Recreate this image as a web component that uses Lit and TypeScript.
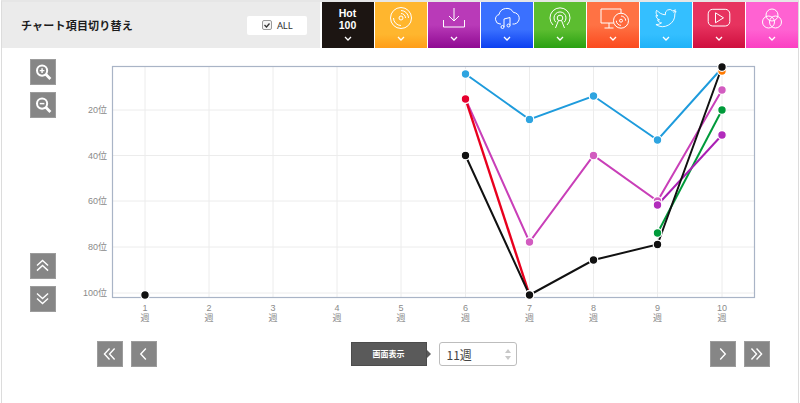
import { LitElement, html, css, svg } from "lit";
import { customElement } from "lit/decorators.js";

type Series = { color: string; dot?: string; width?: number; pts: [number, number][] };

const X = [145, 209, 273, 337, 401, 465.5, 529.5, 593.5, 657.5, 722];
const OX = 60;
const OY = 59;
const series: Series[] = [
  { color: "#1e9bdc", dot: "#2ea4e0", pts: [[X[5], 74], [X[6], 119.5], [X[7], 96], [X[8], 140], [X[9], 68]] },
  { color: "#c93fb8", dot: "#d25cc0", pts: [[X[5], 99], [X[6], 242], [X[7], 155.5], [X[8], 201], [X[9], 90]] },
  { color: "#ff7a00", pts: [[X[9], 71]] },
  { color: "#009a3a", pts: [[X[8], 233], [X[9], 110]] },
  { color: "#aa1fb4", dot: "#b22cbc", pts: [[X[8], 205], [X[9], 135]] },
  { color: "#e8001e", dot: "#e6002e", width: 2.4, pts: [[X[5], 99], [X[6], 295]] },
  { color: "#111", pts: [[X[0], 295]] },
  { color: "#111", pts: [[X[5], 155.5], [X[6], 295], [X[7], 260], [X[8], 244.5], [X[9], 67]] },
];

const chev = html`<svg class="chev" viewBox="0 0 8 5"><path d="M1 1l3 3 3-3" /></svg>`;

const icons = [
  svg`<circle cx="14" cy="14" r="10.5"/><circle cx="14" cy="14" r="2"/><path d="M14 6.500a7.500 7.500 0 0 1 7.500 7.500M14 9.500a4.500 4.500 0 0 1 4.500 4.500M6.500 14a7.500 7.500 0 0 0 7.500 7.500"/>`,
  svg`<path d="M14 4v13M9 12l5 5 5-5M3.500 16v7h21v-7"/>`,
  svg`<path d="M8 20H7a4.800 4.800 0 0 1-1-9.400A7.800 7.800 0 0 1 20.500 8.500 5.800 5.800 0 0 1 21.500 20h-2"/><path d="M11 23v-8l6-1.500v8"/><circle cx="9.500" cy="23" r="1.500"/><circle cx="15.500" cy="21.500" r="1.500"/>`,
  svg`<circle cx="14" cy="14" r="2.800"/><path d="M9.800 18.200a6 6 0 1 1 8.400 0M7 21a10 10 0 1 1 14 0M12.500 16.500L9.500 24M15.500 16.500L18.500 24"/>`,
];

const wideIcon = svg`<path d="M5 5h20v14H5zM13 19v5M8.500 24h9"/><circle cx="25" cy="16.700" r="7.500" fill="#ff6a3d"/><circle cx="25" cy="16.700" r="1.500"/><path d="M25 12a4.700 4.700 0 0 1 4.700 4.700M20.300 16.700a4.700 4.700 0 0 0 4.700 4.700"/>`;
const twitter = svg`<g transform="translate(1.300 1.500) scale(.91)"><path d="M25 6.500c-1 .5-2 .7-2.800.8 1-.6 1.800-1.500 2.100-2.600-1 .6-2 1-3 1.200a4.700 4.700 0 0 0-8 4.300C9.500 10 6 8 3.700 5.200c-1.300 2.200-.6 5 1.400 6.300-.8 0-1.500-.2-2.100-.6 0 2.300 1.600 4.300 3.800 4.800-.7.200-1.400.2-2.100.1.600 1.900 2.400 3.200 4.400 3.300A9.600 9.600 0 0 1 2.900 21a13.500 13.500 0 0 0 20.800-12c.5-.5 1-1.500 1.300-2.500z"/></g>`;
const youtube = svg`<rect x="3.200" y="5.300" width="21.600" height="16.700" rx="4.500"/><path d="M10.500 8.800v10l8-5z"/>`;
const venn = svg`<circle cx="14" cy="11" r="6"/><circle cx="10.500" cy="18" r="6"/><circle cx="17.500" cy="18" r="6"/>`;

const zoomIcon = (plus: boolean) => html`<svg class="ico" viewBox="0 0 26 26">
  <circle cx="12" cy="11.500" r="5.500" stroke-width="2.200"/>
  <path d="M16 15.500l5 5" stroke-width="3"/>
  <path d="M9.500 11.500h5${plus ? "M12 9v5" : ""}" stroke-width="1.600"/>
</svg>`;

const chevrons = (d: string) => html`<svg class="ico" viewBox="0 0 26 26"><path d=${d} stroke-width="1.500"/></svg>`;

@customElement("app-root")
export class AppRoot extends LitElement {
  static styles = css`
    :host {
      display: block;
      width: 800px;
      height: 403px;
      overflow: hidden;
      background: #fff;
      font-family: "Liberation Sans", "Noto Sans CJK JP", sans-serif;
    }
    .frame {
      box-sizing: border-box;
      margin-left: 1px;
      width: 798px;
      height: 403px;
      border-left: 1px solid #dcdcdc;
      border-right: 1px solid #dcdcdc;
      border-top: 2px solid #e6e6e6;
    }
    .top {
      display: flex;
      height: 46px;
    }
    .head {
      width: 318px;
      flex: none;
      box-sizing: border-box;
      background: #ebebeb;
      display: flex;
      align-items: center;
      justify-content: space-between;
      padding: 0 13px 0 19px;
    }
    .title {
      font: 700 11px "Noto Sans CJK JP", sans-serif;
      color: #1c1c1c;
      letter-spacing: 0.200px;
    }
    .all {
      box-sizing: border-box;
      width: 60px;
      height: 19px;
      background: #fff;
      border-radius: 2px;
      display: flex;
      align-items: center;
      gap: 5px;
      padding-left: 15px;
      font: 9.500px "Noto Sans", sans-serif;
      letter-spacing: -0.200px;
      color: #333;
    }
    .box {
      box-sizing: border-box;
      width: 10px;
      height: 10px;
      border: 1px solid #9a9a9a;
      border-radius: 2px;
      background: #f4f4f4;
      display: flex;
    }
    .box svg {
      width: 8px;
      height: 8px;
      fill: none;
      stroke: #333;
      stroke-width: 1.300;
    }
    .tabs {
      margin-left: 1.500px;
      flex: 1;
      display: flex;
      gap: 1px;
    }
    .tab {
      flex: 1;
      position: relative;
      display: flex;
      flex-direction: column;
      align-items: center;
      color: #fff;
      padding-top: 1px;
      box-sizing: border-box;
    }
    .tab .art {
      width: 28px;
      height: 28px;
      margin-top: 1px;
      fill: none;
      stroke: #fff;
      stroke-width: 1;
    }
    .tab .art.wide {
      width: 34px;
    }
    .chev {
      position: absolute;
      bottom: 7px;
      left: 50%;
      margin-left: -4px;
      width: 8px;
      height: 5px;
      fill: none;
      stroke: #fff;
      stroke-width: 1.300;
    }
    .hot {
      font: 700 10.500px/12.200px "Liberation Sans", sans-serif;
      text-align: center;
      margin-top: 4px;
    }
    .hot span {
      display: block;
    }
    .t0 { background: #1c1512; }
    .t1 { background: linear-gradient(#ffb62e 70%, #ff9d18); }
    .t2 { background: linear-gradient(#b93ab8 50%, #8f0a92); }
    .t3 { background: linear-gradient(#3a70ff 60%, #0c3ff0); }
    .t4 { background: linear-gradient(#5cbd30 60%, #2aa012); }
    .t5 { background: linear-gradient(#ff7244 50%, #fb4a1e); }
    .t6 { background: linear-gradient(#34bfff 70%, #1fb2f8); }
    .t7 { background: linear-gradient(#e7335f 50%, #cf0f3e); }
    .t8 { background: linear-gradient(#ff62d2 60%, #fb3fc2); }

    .main {
      display: flex;
      margin-top: 11px;
      margin-left: 28px;
      gap: 4px;
    }
    .side {
      width: 26px;
      height: 253px;
      display: flex;
      flex-direction: column;
      justify-content: space-between;
    }
    .group {
      display: flex;
      flex-direction: column;
      gap: 7px;
    }
    .rowgroup {
      display: flex;
      gap: 8px;
    }
    .btn {
      box-sizing: border-box;
      width: 26px;
      height: 26px;
      background: #868686;
      border: 1px solid #9c9c9c;
    }
    .ico {
      display: block;
      width: 24px;
      height: 24px;
      fill: none;
      stroke: #fff;
    }
    .chart {
      display: block;
      width: 710px;
      height: 266px;
    }
    .chart text {
      font: 9px "Liberation Sans", "Noto Sans CJK JP", sans-serif;
      fill: #8a8a8a;
    }
    .pager {
      display: flex;
      justify-content: space-between;
      align-items: center;
      width: 673px;
      margin: 16px 0 0 95px;
    }
    .center {
      display: flex;
      align-items: center;
    }
    .label {
      position: relative;
      box-sizing: border-box;
      width: 76px;
      height: 24px;
      background: #5a5a5a;
      border: 1px solid #4c4c4c;
      color: #fff;
      font: 700 8px/22px "Noto Sans CJK JP", sans-serif;
      text-align: center;
      margin-right: 12px;
    }
    .label::after {
      content: "";
      position: absolute;
      left: 100%;
      top: 7px;
      margin-left: 1px;
      border: 4px solid transparent;
      border-left-color: #5a5a5a;
    }
    .select {
      box-sizing: border-box;
      width: 78px;
      height: 24px;
      border: 1px solid #bdbdbd;
      border-radius: 3px;
      background: #fff;
      display: flex;
      align-items: center;
      justify-content: space-between;
      padding: 0 5px 0 7px;
      font: 12px "Noto Sans CJK JP", sans-serif;
      color: #444;
    }
    .spin {
      display: flex;
      flex-direction: column;
      gap: 3px;
    }
    .spin i {
      width: 0;
      height: 0;
      border: 3px solid transparent;
    }
    .spin .up {
      border-top: 0;
      border-bottom: 4px solid #c8c8c8;
    }
    .spin .down {
      border-bottom: 0;
      border-top: 4px solid #c8c8c8;
    }
  `;

  private renderTabs() {
    const all = [...icons, wideIcon, twitter, youtube, venn];
    return html`<div class="tabs">
      <div class="tab t0">
        <div class="hot"><span>Hot</span><span>100</span></div>
        ${chev}
      </div>
      ${all.map(
        (ic, i) => html`<div class="tab t${i + 1}">
          <svg class="art ${i === 4 ? "wide" : ""}" viewBox=${i === 4 ? "0 0 34 28" : "0 0 28 28"}>${ic}</svg>
          ${chev}
        </div>`
      )}
    </div>`;
  }

  private renderChart() {
    const px = (x: number) => x - OX;
    const py = (y: number) => y - OY;
    const hs = [110, 155.5, 201, 247, 293];
    const labels = ["20位", "40位", "60位", "80位", "100位"];
    return svg`<svg class="chart" viewBox="0 0 710 266">
      <g stroke="#ececec" stroke-width="1">
        ${X.map((x) => svg`<line x1=${px(x)} x2=${px(x)} y1="8" y2="238"/>`)}
        ${hs.map((y) => svg`<line x1="53" x2="694" y1=${py(y)} y2=${py(y)}/>`)}
      </g>
      <rect x="52.500" y="7.500" width="642" height="231" fill="none" stroke="#a9b4c6" stroke-width="1.200"/>
      ${labels.map(
        (l, i) => svg`<text x="47" y=${py(hs[i]) + 3} text-anchor="end">${l}</text>`
      )}
      ${X.map(
        (x, i) => svg`<text x=${px(x)} y="252" text-anchor="middle">${i + 1}</text>
          <text x=${px(x)} y="262" text-anchor="middle">週</text>`
      )}
      ${series.map(
        (s) => svg`<polyline fill="none" stroke=${s.color} stroke-width=${s.width ?? 2}
          points=${s.pts.map((p) => `${px(p[0])},${py(p[1])}`).join(" ")}/>`
      )}
      ${series.map((s) =>
        s.pts.map(
          (p) => svg`<circle cx=${px(p[0])} cy=${py(p[1])} r="4.300" fill=${s.dot ?? s.color} stroke="#fff" stroke-width="1.200"/>`
        )
      )}
    </svg>`;
  }

  render() {
    return html`<div class="frame">
      <div class="top">
        <div class="head">
          <div class="title">チャート項目切り替え</div>
          <div class="all">
            <span class="box"><svg viewBox="0 0 8 8"><path d="M1.500 4l2 2 3-3.500" /></svg></span>
            ALL
          </div>
        </div>
        ${this.renderTabs()}
      </div>
      <div class="main">
        <div class="side">
          <div class="group">
            <div class="btn">${zoomIcon(true)}</div>
            <div class="btn">${zoomIcon(false)}</div>
          </div>
          <div class="group">
            <div class="btn">${chevrons("M6.500 12.500l6-5.500 6 5.500M6.500 18l6-5.500 6 5.500")}</div>
            <div class="btn">${chevrons("M6.500 7l6 5.500 6-5.500M6.500 12.500l6 5.500 6-5.500")}</div>
          </div>
        </div>
        ${this.renderChart()}
      </div>
      <div class="pager">
        <div class="rowgroup">
          <div class="btn">${chevrons("M12.500 7l-5.500 6 5.500 6M18 7l-5.500 6 5.500 6")}</div>
          <div class="btn">${chevrons("M15 7l-5.500 6 5.500 6")}</div>
        </div>
        <div class="center">
          <div class="label">画面表示</div>
          <div class="select">
            <span>11週</span>
            <span class="spin"><i class="up"></i><i class="down"></i></span>
          </div>
        </div>
        <div class="rowgroup">
          <div class="btn">${chevrons("M10 7l5.500 6-5.500 6")}</div>
          <div class="btn">${chevrons("M7 7l5.500 6-5.500 6M12.500 7l5.500 6-5.500 6")}</div>
        </div>
      </div>
    </div>`;
  }
}
